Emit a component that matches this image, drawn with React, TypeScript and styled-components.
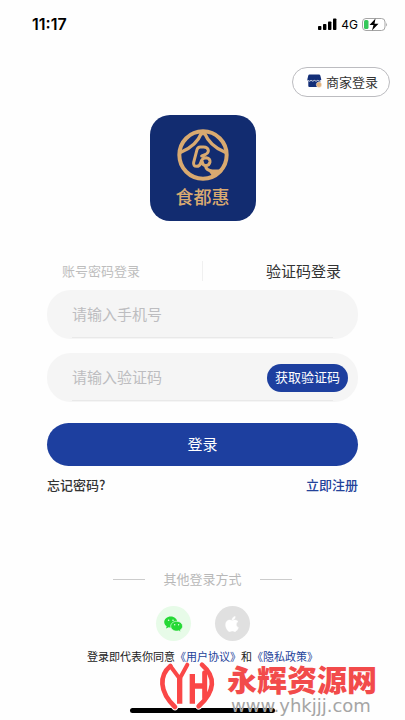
import React from "react";
import styled, { createGlobalStyle } from "styled-components";

const cjk = `"Noto Sans CJK SC", sans-serif`;

const GlobalStyle = createGlobalStyle`
  * { box-sizing: border-box; }
  body { margin: 0; background: #fefefe; font-family: ${cjk}; color: #333; }
  button, input { font-family: inherit; }
  button { border: 0; padding: 0 0 2px; background: none; cursor: pointer; }
  a { text-decoration: none; }
`;

const Page = styled.div`
  position: relative;
  display: flex;
  flex-direction: column;
  min-height: 100vh;
  padding-bottom: 7px;
`;

const StatusBar = styled.header`
  display: flex;
  align-items: center;
  justify-content: space-between;
  height: 48px;
  padding: 0 17px 0 32px;
  color: #000;
  font-family: Inter, sans-serif;
`;

const Time = styled.span`
  font-size: 16px;
  font-weight: 600;
`;

const StatusIcons = styled.div`
  display: flex;
  align-items: center;
  gap: 4px;
  font-size: 12px;
  font-weight: 400;
`;

const MerchantButton = styled.button`
  display: flex;
  align-items: center;
  align-self: flex-end;
  gap: 4px;
  height: 30px;
  margin: 19px 15px 0 0;
  padding: 0 11px 2px 14px;
  border: 1px solid #bcbcc0;
  border-radius: 15px;
  background: #fff;
  color: #333;
  font-size: 13px;
`;

const Logo = styled.div`
  display: flex;
  flex-direction: column;
  align-items: center;
  align-self: center;
  width: 106px;
  height: 106px;
  margin-top: 18px;
  padding-top: 11px;
  border-radius: 20px;
  background: #122c70;
  color: #d9aa70;
`;

const LogoName = styled.span`
  font-size: 18px;
  font-weight: 500;
  line-height: 28px;
`;

const Form = styled.form`
  display: flex;
  flex-direction: column;
  margin: 35px 47px 0;
`;

const Tabs = styled.div`
  display: flex;
  align-items: center;
  justify-content: space-between;
  height: 30px;
  padding: 0 17px 0 15px;
`;

const Tab = styled.button<{ $active?: boolean }>`
  color: ${(p) => (p.$active ? "#333" : "#bdbdbd")};
  font-size: ${(p) => (p.$active ? 15 : 13)}px;
`;

const TabDivider = styled.span`
  width: 1px;
  height: 20px;
  margin-right: 2px;
  background: #f0f0f0;
`;

const Fields = styled.div`
  display: flex;
  flex-direction: column;
  gap: 14px;
  margin-top: 4px;
`;

const Field = styled.div`
  display: flex;
  align-items: center;
  height: 49px;
  padding: 0 10px 0 25px;
  border-radius: 24px;
  background: linear-gradient(#e9e9e9, #e9e9e9) 25px 47px / calc(100% - 50px) 1px no-repeat, #f5f5f5;
`;

const Input = styled.input`
  flex: 1;
  min-width: 0;
  height: 40px;
  padding: 0 0 2px;
  border: 0;
  outline: 0;
  background: transparent;
  color: #333;
  font-size: 15px;
  &::placeholder { color: #bdbdc0; opacity: 1; }
`;

const CodeButton = styled.button`
  height: 28px;
  padding: 0 8px 2px;
  border-radius: 14px;
  background: #1d3f9f;
  color: #fff;
  font-size: 13px;
`;

const LoginButton = styled.button`
  height: 43px;
  margin-top: 21px;
  border-radius: 22px;
  background: #1d3f9f;
  color: #fff;
  font-size: 15px;
`;

const AccountLinks = styled.nav`
  display: flex;
  justify-content: space-between;
  margin-top: 9px;
  font-size: 13px;
  font-weight: 500;
  line-height: 20px;
`;

const Link = styled.a<{ $tone: "dark" | "blue" }>`
  color: ${(p) => (p.$tone === "dark" ? "#333" : "#24429a")};
`;

const OtherHeading = styled.div`
  display: flex;
  align-items: center;
  justify-content: center;
  gap: 18px;
  margin-top: 74px;
  color: #b8b8b8;
  font-size: 13px;
  line-height: 20px;
  &::before, &::after {
    content: "";
    width: 32px;
    height: 1px;
    background: #ccc;
  }
`;

const Providers = styled.div`
  display: flex;
  justify-content: center;
  gap: 24px;
  margin-top: 17px;
`;

const Provider = styled.button<{ $color: string }>`
  display: flex;
  align-items: center;
  justify-content: center;
  width: 35px;
  height: 35px;
  padding: 0;
  border-radius: 50%;
  background: ${(p) => p.$color};
`;

const Agreement = styled.p`
  margin: 7px 0 0;
  color: #222;
  font-size: 11px;
  line-height: 16px;
  text-align: center;
`;

const HomeIndicator = styled.div`
  align-self: center;
  width: 145px;
  height: 5px;
  margin-top: auto;
  border-radius: 3px;
  background: #000;
`;

const Watermark = styled.div`
  position: absolute;
  right: 28px;
  bottom: 2px;
  display: flex;
  align-items: flex-end;
  gap: 7px;
  pointer-events: none;
`;

const WatermarkText = styled.div`
  display: flex;
  flex-direction: column;
`;

const SiteName = styled.strong`
  color: #f24b4b;
  font-size: 30px;
  font-weight: 900;
  line-height: 32px;
`;

const SiteUrl = styled.span`
  padding-left: 4px;
  color: #a5a5a5;
  font-family: "DejaVu Sans", sans-serif;
  font-size: 18px;
  line-height: 24px;
`;

const Signal = () => (
  <svg width="19" height="12" viewBox="0 0 19 12" aria-hidden="true">
    <rect x="0" y="8" width="3.4" height="4" rx="0.8" />
    <rect x="5" y="6" width="3.4" height="6" rx="0.8" />
    <rect x="10" y="3.5" width="3.4" height="8.5" rx="0.8" />
    <rect x="15" y="0.5" width="3.4" height="11.5" rx="0.8" />
  </svg>
);

const Battery = () => (
  <svg width="26" height="13" viewBox="0 0 26 13" aria-hidden="true">
    <rect x="0.5" y="0.5" width="22.5" height="12" rx="3.5" fill="#fff" stroke="#a5a5a5" />
    <rect x="2" y="2" width="4.5" height="9" rx="1.5" fill="#34c759" />
    <path d="M24.2 4.5q1.5 2 0 4z" fill="#999" />
    <path d="M13.500 0.500 7.500 7h4L10 12.500 16.500 5.800h-4z" fill="#000" />
  </svg>
);

const Shop = () => (
  <svg width="15" height="14" viewBox="0 0 15 14" aria-hidden="true">
    <path d="M2.500.5h9.500q1 0 1.300 1L14.300 5.500q0 1.500-1.800 1.500H2Q.3 7 .3 5.500L1.300 1.500q.2-1 1.200-1z" fill="#142f78" />
    <path d="M1.300 7h12v5q0 1-1 1h-10q-1 0-1-1z" fill="#142f78" />
    <path d="M.8 6.400q1.700 1.600 3.300 0 1.700 1.600 3.300 0 1.700 1.600 3.300 0 1.700 1.600 3.300 0" fill="none" stroke="#fff" strokeWidth=".8" />
    <circle cx="12" cy="10.700" r="2.700" fill="#e2b27d" stroke="#fff" strokeWidth=".4" />
  </svg>
);

const Emblem = () => (
  <svg width="56" height="56" viewBox="0 0 168 168" fill="none" stroke="currentColor" strokeLinecap="round" strokeLinejoin="round" aria-hidden="true">
    <circle cx="84" cy="87" r="71" strokeWidth="12" />
    <path d="M79 22Q64 59 19 78M89 22Q104 59 149 78" strokeWidth="10" />
    <path d="M72 18h24l-12 11z" fill="currentColor" stroke="none" />
    <path d="M80 90Q102 84 100 73Q98 63 86 63H76Q68 63 66 71L56 109Q54 121 65 121Q74 121 77 111Q80 95 94 95Q106 97 105 108Q103 119 92 119Q82 117 82 107" strokeWidth="9" />
    <path d="M91 119Q94 134 112 135H138" strokeWidth="9" />
    <path d="M103 138L137 132L114 154z" fill="currentColor" stroke="none" />
  </svg>
);

const WeChat = () => (
  <svg width="19" height="16" viewBox="0 0 19 16" aria-hidden="true">
    <path d="M6.800.5C3 .5.200 3 .200 6c0 1.800 1 3.300 2.500 4.300L2 12.500l2.700-1.300q1 .3 2.100.3c3.600 0 6.500-2.500 6.500-5.500S10.400.5 6.800.5z" fill="#25d935" />
    <path d="M12.700 5.300c-3.300 0-6 2.200-6 4.900s2.700 4.900 6 4.900q1 0 1.900-.3l2.200 1-.5-1.900c1.400-.9 2.300-2.200 2.300-3.700 0-2.700-2.600-4.900-5.900-4.900z" fill="#25d935" stroke="#e7fbe8" strokeWidth=".7" />
    <g fill="#e7fbe8"><circle cx="4.600" cy="4.300" r=".8" /><circle cx="9" cy="4.300" r=".8" /><circle cx="10.700" cy="8.800" r=".7" /><circle cx="14.600" cy="8.800" r=".7" /></g>
  </svg>
);

const Apple = () => (
  <svg width="14" height="16" viewBox="0 20 384 470" fill="#fff" aria-hidden="true">
    <path d="M318.700 268.700c-.2-36.700 16.400-64.400 50-84.800-18.800-26.900-47.200-41.700-84.700-44.600-35.500-2.800-74.300 20.700-88.500 20.700-15 0-49.400-19.700-76.400-19.700C63.300 141.200 4 184.800 4 273.500q0 39.300 14.400 81.200c12.800 36.700 59 126.700 107.200 125.200 25.200-.6 43-17.900 75.800-17.900 31.800 0 48.300 17.900 76.400 17.900 48.600-.7 90.400-82.500 102.600-119.300-65.200-30.700-61.700-90-61.700-91.900zm-56.600-164.200c27.300-32.400 24.800-61.900 24-72.500-24.100 1.400-52 16.400-67.900 34.900-17.500 19.800-27.800 44.300-25.600 71.900 26.100 2 49.900-11.400 69.500-34.300z" stroke="#fff" strokeWidth="14" />
  </svg>
);

const WatermarkLogo = () => (
  <svg width="64" height="60" viewBox="0 0 192 180" fill="none" strokeLinecap="round" strokeLinejoin="round" aria-hidden="true">
    <path d="M43 24C10 52 8 100 57 147M138 20C180 56 178 100 128 145" stroke="#fff" strokeWidth="20" />
    <g stroke="#fa4747">
      <path d="M43 24C10 52 8 100 57 147M138 20C180 56 178 100 128 145" strokeWidth="14" />
      <path d="M43 24L71 62L94 20" strokeWidth="12" />
      <path d="M71 60V137M109 48V137M109 84H146" strokeWidth="16" strokeLinecap="butt" />
      <path d="M146 44V120" strokeWidth="15" />
    </g>
  </svg>
);

export default function App() {
  return (
    <>
      <GlobalStyle />
      <Page>
        <StatusBar>
          <Time>11:17</Time>
          <StatusIcons><Signal /><span>4G</span><Battery /></StatusIcons>
        </StatusBar>
        <MerchantButton type="button"><Shop />商家登录</MerchantButton>
        <Logo><Emblem /><LogoName>食都惠</LogoName></Logo>
        <Form onSubmit={(e) => e.preventDefault()}>
          <Tabs role="tablist">
            <Tab type="button" role="tab" aria-selected={false}>账号密码登录</Tab>
            <TabDivider />
            <Tab type="button" role="tab" aria-selected $active>验证码登录</Tab>
          </Tabs>
          <Fields>
            <Field><Input type="tel" aria-label="请输入手机号" placeholder="请输入手机号" /></Field>
            <Field>
              <Input inputMode="numeric" aria-label="请输入验证码" placeholder="请输入验证码" />
              <CodeButton type="button">获取验证码</CodeButton>
            </Field>
          </Fields>
          <LoginButton type="submit">登录</LoginButton>
          <AccountLinks>
            <Link href="#forgot" $tone="dark">忘记密码?</Link>
            <Link href="#register" $tone="blue">立即注册</Link>
          </AccountLinks>
        </Form>
        <OtherHeading>其他登录方式</OtherHeading>
        <Providers>
          <Provider type="button" aria-label="微信" $color="#e7fbe8"><WeChat /></Provider>
          <Provider type="button" aria-label="Apple" $color="#e0e0e0"><Apple /></Provider>
        </Providers>
        <Agreement>
          登录即代表你同意<Link href="#terms" $tone="blue">《用户协议》</Link>和<Link href="#privacy" $tone="blue">《隐私政策》</Link>
        </Agreement>
        <HomeIndicator />
        <Watermark>
          <WatermarkLogo />
          <WatermarkText><SiteName>永辉资源网</SiteName><SiteUrl>www.yhkjjj.com</SiteUrl></WatermarkText>
        </Watermark>
      </Page>
    </>
  );
}
